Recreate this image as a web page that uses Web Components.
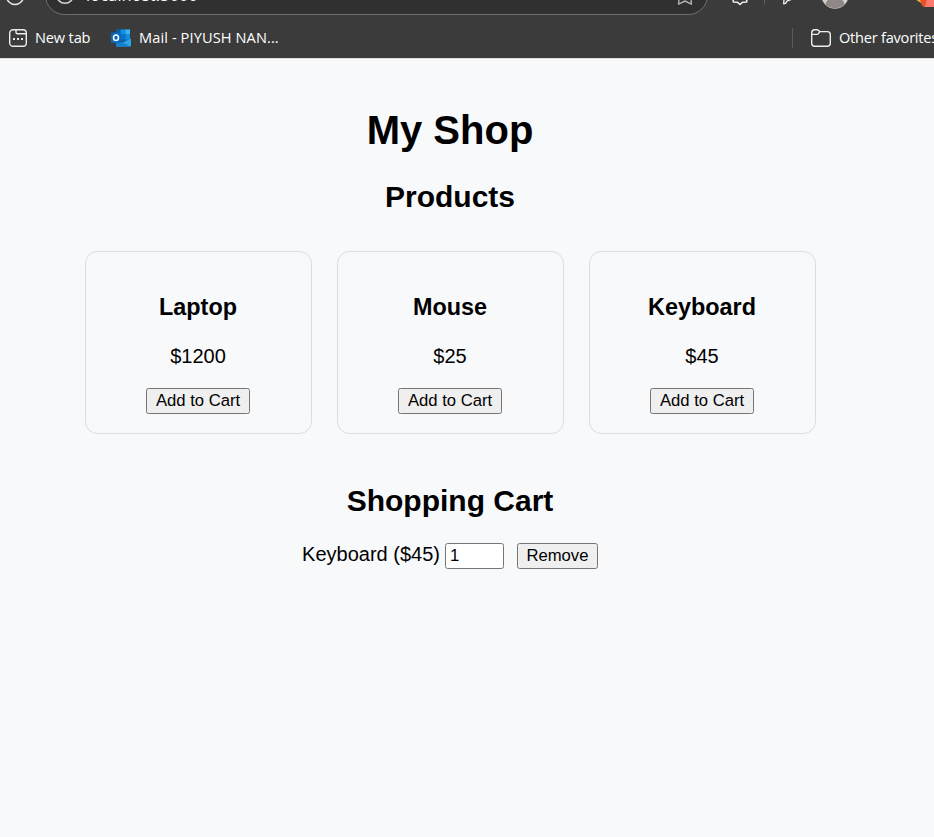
<!DOCTYPE html>
<html lang="en">
<head>
<meta charset="utf-8">
<title>My Shop</title>
<style>
html,body{margin:0;height:837px;overflow:hidden;background:#f8f9fb;font-family:"Liberation Sans",Arial,sans-serif;color:#000}
</style>
</head>
<body>
<browser-bar></browser-bar>
<shop-app></shop-app>
<script>
const define = (name, html) => customElements.define(name, class extends HTMLElement {
  constructor() {
    super();
    this.attachShadow({ mode: 'open' }).innerHTML = html;
  }
});

define('fav-item', `<style>
:host{display:flex;align-items:center;height:24px;color:#fff;font:14.6px/24px "Open Sans","Noto Sans",sans-serif;white-space:nowrap}
::slotted(svg){display:block;flex:none;margin-right:var(--gap,7px)}
span{margin-top:-2px}
</style><slot name="icon"></slot><span><slot></slot></span>`);

define('browser-bar', `<style>
:host{display:flex;flex-direction:column;box-sizing:border-box;height:59px;background:#3b3b3b;border-bottom:1px solid #dcdcdc;overflow:hidden}
.top{display:flex;height:20px;flex:none;position:relative;overflow:hidden}
.top svg{position:absolute;inset:0}
.url{position:absolute;left:86px;top:-16px;color:#fff;font:16px/22px "Open Sans","Noto Sans",sans-serif;letter-spacing:.3px;white-space:nowrap}
.favs{display:flex;align-items:center;padding-left:8px;height:24px;margin-top:6px;flex:none}
.tab{letter-spacing:-.17px;width:102px}
.mail{--gap:8px;letter-spacing:.1px}
.sep{width:1px;height:20px;background:#5b5b5b;margin-left:auto}
.other{--gap:7px;width:124px;margin-left:17px;letter-spacing:-.24px}
</style>
<div class="top">
<svg width="934" height="20" fill="none">
<circle cx="15" cy="-4" r="8.5" stroke="#e8e8e8" stroke-width="1.6"/>
<rect x="45.5" y="-23.5" width="662" height="38" rx="19" fill="#303030" stroke="#707070"/>
<circle cx="65" cy="-5" r="8.3" stroke="#d0d0d0" stroke-width="1.5"/>
<path d="M679.2-4 L678.6 4.2 L685 1 L691.4 4.2 L690.8-4" stroke="#b2b2b2" stroke-width="1.4" stroke-linejoin="round"/>
<path d="M732.5-3 L733.5 2 L737.2 2.2 L740 4.5 L742.8 2.2 L746.5 2 L747.5-3" stroke="#eee" stroke-width="1.6" stroke-linejoin="round"/>
<path d="M764.5 0V4.5" stroke="#606060"/>
<path d="M784.3-5 L783.7 3.7 L785.5 3.4 L787.2.8 L791-.5" stroke="#eee" stroke-width="1.4" stroke-linejoin="round"/>
<circle cx="835" cy="-5" r="13.7" fill="#d2d0ce"/>
<path d="M825.5 4.5C826.5-.5 830-2 835-2S843.5-.5 844.5 4.5A13.7 13.7 0 0 1 825.5 4.5" fill="#8e8986"/>
<path d="M915-1H934V2L921 3Z" fill="#f5b62e"/>
<path d="M920-1H934V7H924Q921 6 920-1Z" fill="#e9502c"/>
<path d="M927-1H934V7H925Z" fill="#ff796d"/>
</svg>
<span class="url">localhost:3000</span>
</div>
<div class="favs">
<fav-item class="tab"><svg slot="icon" width="20" height="20" fill="none" stroke="#ececec" stroke-width="1.4"><rect x="1.7" y="1.7" width="16.6" height="16.6" rx="3.4"/><path d="M8 2V4.2Q8 5.8 9.6 5.8H18"/><path d="M5 11h2M9 11h2M13 11h2" stroke-width="1.9"/></svg>New tab</fav-item>
<fav-item class="mail"><svg slot="icon" width="21" height="20"><rect x="6" y="1.5" width="14" height="12" fill="#0a66b8"/><rect x="6" y="1.5" width="5" height="5" fill="#0c59a4"/><rect x="10.5" y="1.5" width="5" height="5" fill="#168ede"/><rect x="15.5" y="1.5" width="4.5" height="5" fill="#35b5f2"/><rect x="10.5" y="6.5" width="5" height="5" fill="#0b70c6"/><rect x="15.5" y="6.5" width="4.5" height="5" fill="#168ede"/><path d="M6 18.5V12L13 14.5L21 10.5V17.5Q21 18.5 20 18.5Z" fill="#29a5e8"/><path d="M6 11.5L20.5 18.5H7Q6 18.5 6 17.5Z" fill="#1380d0"/><rect x="1" y="4.5" width="10" height="10.5" rx="1" fill="#0868be"/><ellipse cx="6" cy="9.8" rx="2.5" ry="2.8" fill="none" stroke="#fff" stroke-width="1.5"/></svg>Mail - PIYUSH NAN...</fav-item>
<i class="sep"></i>
<fav-item class="other"><svg slot="icon" width="22" height="20" fill="none" stroke="#ececec" stroke-width="1.4"><path d="M1.7 5V15.2Q1.7 18.2 4.7 18.2H17.3Q20.3 18.2 20.3 15.2V6.4Q20.3 3.6 17.3 3.6H9.6L8.3 2.3Q7.7 1.8 6.8 1.8H4.7Q1.7 1.8 1.7 5Z"/><path d="M2 6.4H7Q7.8 6.4 8.4 5.6L9.8 3.7"/></svg>Other favorites</fav-item>
</div>`);

define('ui-button', `<style>
:host{display:block}
button{display:block;box-sizing:border-box;width:100%;height:26px;margin:0;padding:0;border:1px solid #767676;border-radius:2.5px;background:#efefef;color:#000;font:16.667px/20px "Liberation Sans",Arial,sans-serif}
</style><button><slot></slot></button>`);

define('product-card', `<style>
:host{display:flex;flex-direction:column;align-items:center;box-sizing:border-box;width:227px;height:183px;padding:42px 1px 0 0;border:1px solid #dcdde0;border-radius:12.5px}
h3{margin:0 0 25px;font-size:23.4px;line-height:26px}
p{margin:0 0 20px;font-size:20px;line-height:23px}
ui-button{width:104px}
</style><h3><slot name="name"></slot></h3><p><slot name="price"></slot></p><ui-button>Add to Cart</ui-button>`);

define('cart-item', `<style>
:host{display:flex;justify-content:center;height:28px;font-size:20px;line-height:23px}
span{padding-top:1px}
input{box-sizing:border-box;width:59px;height:26px;margin:1px 13px 0 5px;padding:0 4px;border:1px solid #767676;border-radius:2.5px;background:#fff;color:#000;font:16.667px "Liberation Sans",Arial,sans-serif}
ui-button{width:81px;margin-top:1px}
</style><span><slot></slot></span><input value="1"><ui-button>Remove</ui-button>`);

define('shop-app', `<style>
:host{display:flex;flex-direction:column;width:900px;padding-top:48px;text-align:center}
h1{margin:0 0 27px;font-size:40px;line-height:46px}
h2{margin:0;font-size:30px;line-height:34px}
.grid{display:flex;gap:25px;margin:37px 0 50px 85px}
cart-item{margin-top:24px}
</style>
<h1>My Shop</h1><h2>Products</h2>
<div class="grid">
<product-card><span slot="name">Laptop</span><span slot="price">$1200</span></product-card>
<product-card><span slot="name">Mouse</span><span slot="price">$25</span></product-card>
<product-card><span slot="name">Keyboard</span><span slot="price">$45</span></product-card>
</div>
<h2>Shopping Cart</h2>
<cart-item>Keyboard ($45)</cart-item>`);
</script>
</body>
</html>
